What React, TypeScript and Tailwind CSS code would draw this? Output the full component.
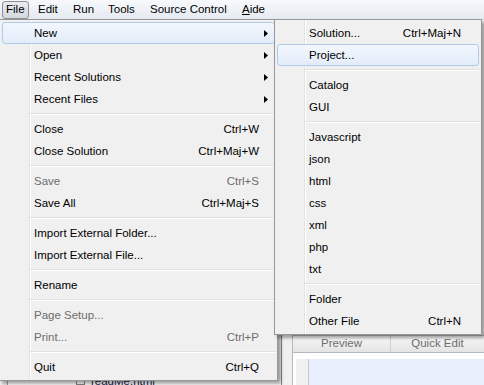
import React from 'react';

type Entry =
  | { label: string; shortcut?: string; arrow?: boolean; disabled?: boolean; active?: boolean }
  | 'sep';

const fileMenu: Entry[] = [
  { label: 'New', arrow: true, active: true },
  { label: 'Open', arrow: true },
  { label: 'Recent Solutions', arrow: true },
  { label: 'Recent Files', arrow: true },
  'sep',
  { label: 'Close', shortcut: 'Ctrl+W' },
  { label: 'Close Solution', shortcut: 'Ctrl+Maj+W' },
  'sep',
  { label: 'Save', shortcut: 'Ctrl+S', disabled: true },
  { label: 'Save All', shortcut: 'Ctrl+Maj+S' },
  'sep',
  { label: 'Import External Folder...' },
  { label: 'Import External File...' },
  'sep',
  { label: 'Rename' },
  'sep',
  { label: 'Page Setup...', disabled: true },
  { label: 'Print...', shortcut: 'Ctrl+P', disabled: true },
  'sep',
  { label: 'Quit', shortcut: 'Ctrl+Q' },
];

const newMenu: Entry[] = [
  { label: 'Solution...', shortcut: 'Ctrl+Maj+N' },
  { label: 'Project...', active: true },
  'sep',
  { label: 'Catalog' },
  { label: 'GUI' },
  'sep',
  { label: 'Javascript' },
  { label: 'json' },
  { label: 'html' },
  { label: 'css' },
  { label: 'xml' },
  { label: 'php' },
  { label: 'txt' },
  'sep',
  { label: 'Folder' },
  { label: 'Other File', shortcut: 'Ctrl+N' },
];

function Arrow() {
  return (
    <svg width="4" height="7" viewBox="0 0 4 7" className="absolute right-[6px] top-[7px]">
      <path d="M0 0 L4 3.5 L0 7 Z" fill="#000" />
    </svg>
  );
}

function Menu({ items, className, shortcutPad }: { items: Entry[]; className: string; shortcutPad: string }) {
  return (
    <div
      className={`absolute border border-[#979797] bg-[#f0f0f0] py-[2px] shadow-[3px_3px_3px_rgba(0,0,0,0.35)] ${className}`}
    >
      <div className="absolute top-0 bottom-0 left-[29px] w-px bg-[#e2e3e3]" />
      <div className="absolute top-0 bottom-0 left-[30px] w-px bg-white" />
      {items.map((it, i) =>
        it === 'sep' ? (
          <div key={i} className="relative ml-[30px] mr-px h-[8px]">
            <div className="absolute left-0 right-0 top-[3px] h-px bg-[#e0e0e0]" />
            <div className="absolute left-0 right-0 top-[4px] h-px bg-white" />
          </div>
        ) : (
          <div
            key={i}
            className={`relative mx-[2px] flex h-[22px] items-center rounded-[3px] border pl-[31px] pt-px ${shortcutPad} ${
              it.active
                ? 'border-[#aecbec] bg-gradient-to-b from-[#f2f7fd] to-[#e2ecf9]'
                : 'border-transparent'
            } ${it.disabled ? 'text-[#6d6d6d]' : 'text-black'}`}
          >
            <span>{it.label}</span>
            {it.shortcut && <span className="ml-auto">{it.shortcut}</span>}
            {it.arrow && <Arrow />}
          </div>
        )
      )}
    </div>
  );
}

export default function App() {
  return (
    <div className="relative h-[385px] w-[484px] overflow-hidden bg-[#f0f0f0] font-['Liberation_Sans',Arial,sans-serif] text-[11.5px] text-black">
      {/* menu bar */}
      <div className="flex h-[20px] items-start bg-gradient-to-b from-[#f7f9fc] to-[#e5eaf1] border-b border-[#dfe5ec]">
        <div className="ml-[2px] mt-px flex h-[18px] w-[27px] items-center rounded-[3px] border border-[#8e8f8f] bg-gradient-to-b from-[#e8ebef] to-[#d4d9df] pl-[3px]">
          File
        </div>
        <div className="flex h-[20px] w-[35px] items-center pl-[9px]">Edit</div>
        <div className="flex h-[20px] w-[35px] items-center pl-[9px]">Run</div>
        <div className="flex h-[20px] w-[42px] items-center pl-[9px]">Tools</div>
        <div className="flex h-[20px] w-[92px] items-center pl-[9px]">Source Control</div>
        <div className="flex h-[20px] items-center pl-[9px]">
          <span className="underline underline-offset-1">A</span>ide
        </div>
      </div>

      {/* application behind the menus */}
      <div className="flex h-[365px]">
        <div className="flex w-[281px] flex-col justify-end pl-[7px]">
          <div className="h-[6px] border-l border-[#a0a0a0] bg-white pl-[68px]">
            <div className="flex h-[14px] items-start gap-[6px]">
              <div className="mt-[-2px] h-[8px] w-[9px] border border-[#8a8a8a] bg-white" />
              <span className="mt-[-6px] text-[#1c1c4a]">readMe.html</span>
            </div>
          </div>
        </div>
        <div className="flex flex-1 flex-col border-l border-[#828790] pl-[10px]">
          <div className="flex-1" />
          <div className="flex h-[17px] border-l border-t border-[#b5b9bf] bg-gradient-to-b from-[#f7f7f7] to-[#e4e4e4] text-[#6d6d6d]">
            <div className="flex w-[98px] items-center justify-center border-r border-[#d0d0d0]">Preview</div>
            <div className="flex flex-1 items-center justify-center">Quick Edit</div>
          </div>
          <div className="h-[33px] border-l border-t border-[#b5b9bf] bg-white pl-[3px] pt-[6px]">
            <div className="flex h-full">
              <div className="w-[13px] border-r border-[#c8c8c8] bg-[#f0f0f0]" />
              <div className="flex-1 bg-[#e7f0fc]" />
            </div>
          </div>
        </div>
      </div>

      <Menu items={fileMenu} className="left-[-1px] top-[19px] w-[279px]" shortcutPad="pr-[15px]" />
      <Menu items={newMenu} className="left-[274px] top-[19px] w-[208px]" shortcutPad="pr-[17px]" />
    </div>
  );
}
